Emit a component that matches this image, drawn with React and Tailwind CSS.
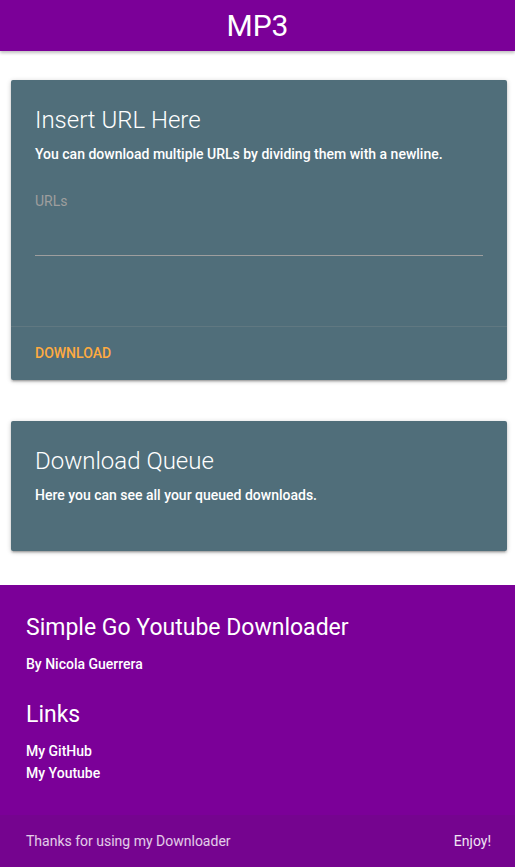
import React from 'react';

const font = { fontFamily: 'Roboto, "Noto Sans", sans-serif' };

function Card({ title, text, children, action }) {
  return (
    <div className="ml-[11px] mr-[8px] rounded-[2px] bg-[#506e7a] text-white shadow-[0_2px_2px_0_rgba(0,0,0,0.14),0_3px_1px_-2px_rgba(0,0,0,0.12),0_1px_5px_0_rgba(0,0,0,0.2)]">
      <div className="p-6">
        <div className="text-[24px] font-light leading-8 mb-2">{title}</div>
        <p className="text-[14px] font-medium leading-5">{text}</p>
        {children}
      </div>
      {action}
    </div>
  );
}

export default function App() {
  return (
    <div className="min-h-[867px] bg-white flex flex-col" style={font}>
      <nav className="h-[51px] bg-[#7b0098] flex items-center justify-center shadow-[0_2px_3px_0_rgba(0,0,0,0.25)] relative z-10">
        <span className="text-white text-[30px] leading-none">MP3</span>
      </nav>

      <main className="pt-[29px] flex flex-col gap-[41px]">
        <Card
          title="Insert URL Here"
          text="You can download multiple URLs by dividing them with a newline."
          action={
            <div className="border-t border-[rgba(160,160,160,0.2)] px-6 pt-[14px] h-[54px]">
              <button className="text-[#ffab40] text-[14px] font-medium uppercase leading-[22px]">Download</button>
            </div>
          }
        >
          <div className="mt-[27px]">
            <label className="block text-[14px] leading-5 text-[#9e9e9e]">URLs</label>
            <div className="h-[44px]" />
            <div className="border-b border-[#9e9e9e]" />
            <div className="h-[46px]" />
          </div>
        </Card>

        <Card title="Download Queue" text="Here you can see all your queued downloads.">
          <div className="h-[22px]" />
        </Card>
      </main>

      <footer className="mt-[34px] bg-[#7b0098] text-white flex-1 flex flex-col">
        <div className="px-[26px] pt-[30px] flex-1">
          <h5 className="text-[23px] leading-[26px]">Simple Go Youtube Downloader</h5>
          <p className="mt-[13px] text-[14px] font-medium leading-5">By Nicola Guerrera</p>
          <h5 className="mt-[28px] text-[23px] leading-[26px]">Links</h5>
          <ul className="mt-[12px] text-[14px] font-medium leading-[22px]">
            <li><a>My GitHub</a></li>
            <li><a>My Youtube</a></li>
          </ul>
        </div>
        <div className="h-[52px] bg-[#75048f] px-[26px] flex items-center justify-between text-[14px] text-white/80">
          <span>Thanks for using my Downloader</span>
          <span className="text-white/90 mr-[-2px]">Enjoy!</span>
        </div>
      </footer>
    </div>
  );
}
